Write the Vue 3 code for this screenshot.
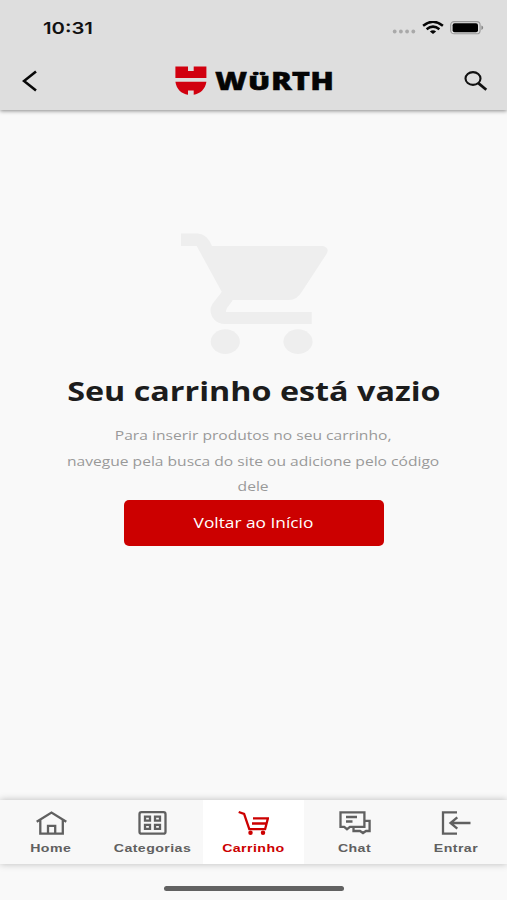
<script setup>
const tabs = [
  { id: 'home', label: 'Home' },
  { id: 'categories', label: 'Categorias' },
  { id: 'cart', label: 'Carrinho' },
  { id: 'chat', label: 'Chat' },
  { id: 'login', label: 'Entrar' }
]
const active = 'cart'
</script>

<template>
  <div class="app">
    <header class="top">
      <div class="status">
        <span class="clock">10:31</span>
        <div class="indicators">
          <svg class="dots" width="24" height="6" viewBox="0 0 24 6"><g fill="#a9a9a9"><circle cx="2.7" cy="2.500" r="1.9" /><circle cx="8.9" cy="2.500" r="1.9" /><circle cx="15.1" cy="2.500" r="1.9" /><circle cx="21.3" cy="2.500" r="1.9" /></g></svg>
          <svg class="wifi" width="22" height="14" viewBox="0 0 22 14"><g fill="none" stroke="#050505" stroke-width="2.5"><path d="M1.1 4.700Q11-3.100 20.9 4.700" /><path d="M4.6 8.200Q11 3.100 17.4 8.200" /></g><path d="M7.9 10.500Q11 8.100 14.1 10.500L11 13Z" fill="#050505" /></svg>
          <svg class="battery" width="34" height="14" viewBox="0 0 34 14"><rect x=".7" y=".6" width="29.4" height="12.2" rx="3.4" fill="none" stroke="#999" stroke-width="1.1" /><rect x="2.6" y="2.2" width="25.4" height="9" rx="2" /><path d="M31.4 4.6q1.8.6 1.8 2.2t-1.8 2.2z" fill="#888" /></svg>
        </div>
      </div>
      <div class="bar">
        <svg class="back" width="16" height="22" viewBox="0 0 16 22"><path d="M14 1.4L2 11l12 9.600" fill="none" stroke="#080808" stroke-width="2.600" /></svg>
        <div class="brand">
          <svg width="32" height="30" viewBox="0 0 32 30"><path fill="#d1000f" d="M.4.5H13V4.900H18.700V.5H31.400V12H.4ZM.4 15.700H31.400C30.500 23 25 27.800 18.700 28.700V24.500H13V28.700C6.500 27.800 1.300 23 .4 15.700Z" /></svg>
          <span class="wordbox"><span class="word">W<span class="umlaut">Ü</span>RTH</span></span>
        </div>
        <svg class="search" width="24" height="21" viewBox="0 0 24 21"><ellipse cx="9" cy="7.500" rx="7.500" ry="6.400" fill="none" stroke="#111" stroke-width="2.100" /><path d="M14.300 12.100L22.300 18.800" stroke="#111" stroke-width="2.700" /></svg>
      </div>
    </header>

    <main class="empty">
      <svg class="cart" width="148" height="122" viewBox="0 0 148 122"><path fill="#eee" d="M0 .5H17Q26 1 31 13H142Q149 15 145.500 21L121 58.500Q116 67 108 67H51.700C50 71 45 74 45 79H130.700V91H44C35 91 29.500 84 29.500 77C29.500 71 36 66 40.700 58.700L15.700 13H0Z" /><ellipse cx="44.300" cy="108.600" rx="14.600" ry="12.300" fill="#eee" /><ellipse cx="117" cy="108.600" rx="14.600" ry="12.300" fill="#eee" /></svg>
      <h1><span>Seu carrinho está vazio</span></h1>
      <p><span>Para inserir produtos no seu carrinho,<br>navegue pela busca do site ou adicione pelo código<br>dele</span></p>
      <button><span>Voltar ao Início</span></button>
    </main>

    <nav>
      <a v-for="tab in tabs" :key="tab.id" :class="{ active: tab.id === active }">
        <svg v-if="tab.id === 'home'" width="32" height="26" viewBox="0 0 32 26"><path d="M1.700 11.800L16.500 2.500l14.800 9.300M5.300 10V23.600H27.800V10M13 23V15.800H20.200V23" /></svg>
        <svg v-else-if="tab.id === 'categories'" width="32" height="26" viewBox="0 0 32 26"><rect x="3.500" y="2.200" width="26" height="21.500" rx="2" /><path d="M9 6.700h5v4H9zM19 6.700h5v4h-5zM9 14.900h5v4H9zM19 14.900h5v4h-5z" /></svg>
        <svg v-else-if="tab.id === 'cart'" width="32" height="26" viewBox="0 0 32 26"><path d="M1.700 2L7.100 4L12.300 19.200H28.100L30.900 8.300H16M15 13.500H29.500" /><circle cx="13.500" cy="22.700" r="1.100" class="solid" /><circle cx="26" cy="22.700" r="1.100" class="solid" /></svg>
        <svg v-else-if="tab.id === 'chat'" width="32" height="26" viewBox="0 0 32 26"><path d="M1.500 2.300H25.400V16.800H11L8 19.200L5.200 16.800H1.500ZM7 7H18M7 11.500H13.500M25.400 10.800H30.600V21H27L24 23L21 21H14.500V17" /></svg>
        <svg v-else width="32" height="26" viewBox="0 0 32 26"><path d="M17 2.300H3V23.700H17M30.500 13H10.500M17.300 7.300L10.500 13L17.300 18.700" /></svg>
        <span>{{ tab.label }}</span>
      </a>
    </nav>
    <footer><i class="home-indicator"></i></footer>
  </div>
</template>

<style>
body { margin: 0; background: #f9f9f9; }
</style>

<style scoped>
.app { width: 507px; height: 900px; display: flex; flex-direction: column; background: #f9f9f9; font-family: "Open Sans", sans-serif; overflow: hidden; }
.top { height: 110px; flex: none; background: #dedede; box-shadow: 0 1px 4px rgba(0, 0, 0, .45); }
.status { height: 55px; display: flex; align-items: center; justify-content: space-between; padding: 0 23px 0 43px; box-sizing: border-box; }
.clock { font: 600 16.5px/20px Inter, sans-serif; color: #111; transform: scaleX(1.23); transform-origin: left; }
.indicators { display: flex; align-items: center; }
.dots { margin: 9px 6px 0 0; }
.wifi { margin-right: 6px; }
.bar { height: 52px; display: flex; align-items: center; justify-content: space-between; padding: 0 19px 0 22px; }
.brand { display: flex; align-items: center; gap: 8px; margin-left: 6px; }
.wordbox { width: 118px; height: 28px; }
.word { display: inline-block; font: 800 24px/28px "Open Sans", sans-serif; color: #050505; -webkit-text-stroke: .4px #050505; transform: scaleX(1.29); transform-origin: left; white-space: nowrap; }
.umlaut { display: inline-block; width: 18.4px; font-size: 18.5px; line-height: 20px; text-align: center; transform: scaleX(1.2); -webkit-text-stroke: .7px #050505; }
.empty { flex: 1; display: flex; flex-direction: column; align-items: center; padding-top: 123px; text-align: center; }
.cart { flex: none; margin-left: 2px; }
h1 { margin: 15px 0 0; height: 42px; font-size: 27.5px; line-height: 42px; font-weight: 700; color: #1c1c1c; white-space: nowrap; }
h1 span, p span, button span, nav span { display: inline-block; transform: scaleX(1.2); }
h1 span { transform: scaleX(1.175); }
p { margin: 11px 0 0; height: 76.5px; font-size: 13px; line-height: 25.6px; color: #999; white-space: nowrap; }
button { flex: none; width: 260px; height: 46px; padding: 0; border: 0; border-radius: 5px; background: #c00; color: #fff; font: 500 14px/44px "Open Sans", sans-serif; }
button span { transform: scaleX(1.235); }
nav { flex: none; height: 64px; display: grid; grid-template-columns: repeat(5, 1fr); background: #f8f8f8; box-shadow: 0 0 7px rgba(0, 0, 0, .25); }
nav a { display: flex; flex-direction: column; align-items: center; padding-top: 10px; color: #606060; }
nav .active { background: #fff; color: #c00; }
nav svg { flex: none; fill: none; stroke: currentColor; stroke-width: 2.3; }
.solid { fill: currentColor; }
nav span { font: 700 11.5px/14px "Liberation Sans", sans-serif; letter-spacing: .35px; margin-top: 5px; transform: scaleX(1.23); }
footer { flex: none; height: 36px; display: flex; justify-content: center; }
.home-indicator { width: 180px; height: 5px; margin-top: 22px; border-radius: 3px; background: #626262; }
</style>
